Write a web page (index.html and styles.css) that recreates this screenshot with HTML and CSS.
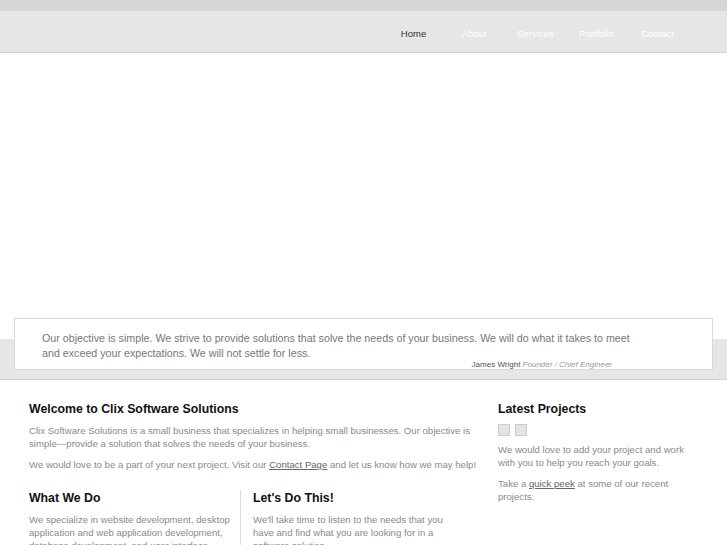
FILE: index.html
```html
<!DOCTYPE html>
<html>
<head>
<meta charset="utf-8">
<link rel="stylesheet" href="styles.css">
</head>
<body>
<div class="topstrip"></div>
<header class="navbar">
  <nav class="nav">
    <a class="nav-item active" href="#">Home</a>
    <a class="nav-item" href="#">About</a>
    <a class="nav-item" href="#">Services</a>
    <a class="nav-item" href="#">Portfolio</a>
    <a class="nav-item" href="#">Contact</a>
  </nav>
</header>
<div class="hero"></div>
<div class="band">
  <div class="quote">
    <p class="quote-text">Our objective is simple. We strive to provide solutions that solve the needs of your business. We will do what it takes to meet and exceed your expectations. We will not settle for less.</p>
    <p class="quote-by"><span class="name">James Wright</span> <span class="role">Founder / Chief Engineer</span></p>
  </div>
</div>
<main class="content">
  <section class="main-col">
    <h2>Welcome to Clix Software Solutions</h2>
    <p>Clix Software Solutions is a small business that specializes in helping small businesses. Our objective is simple—provide a solution that solves the needs of your business.</p>
    <p>We would love to be a part of your next project. Visit our <a href="#">Contact Page</a> and let us know how we may help!</p>
    <div class="split">
      <div class="split-col">
        <h2>What We Do</h2>
        <p>We specialize in website development, desktop application and web application development, database development, and user interface design.</p>
      </div>
      <div class="split-col right">
        <h2>Let's Do This!</h2>
        <p>We'll take time to listen to the needs that you have and find what you are looking for in a software solution.</p>
      </div>
    </div>
  </section>
  <aside class="side-col">
    <h2>Latest Projects</h2>
    <div class="thumbs"><span class="thumb"></span><span class="thumb"></span></div>
    <p>We would love to add your project and work with you to help you reach your goals.</p>
    <p>Take a <a href="#">quick peek</a> at some of our recent projects.</p>
  </aside>
</main>
</body>
</html>
```
FILE: styles.css
```css
* { box-sizing: border-box; }
html, body { margin: 0; padding: 0; background: #fff; }
body { font-family: "Liberation Sans", Arial, sans-serif; }
.topstrip { height: 11px; background: #d6d6d8; }
.navbar { height: 42px; background: #e6e6e6; border-bottom: 1px solid #d2d2d2; }
.nav { width: 699px; margin: 0 auto; display: flex; justify-content: flex-end; padding-right: 25px; height: 41px; align-items: center; padding-top: 4px; }
.nav-item { font-size: 9.5px; color: #fff; text-decoration: none; width: 61px; text-align: center; }
.nav-item.active { color: #333; }
.hero { height: 286px; }
.band { display: flow-root; height: 41px; background: #e6e6e6; border-bottom: 1px solid #d2d2d2; }
.quote { width: 699px; margin: -21px auto 0; height: 52px; background: #fff; border: 1px solid #d8d8d8; padding: 12px 27px 0; }
.quote-text { margin: 0; font-size: 10.7px; line-height: 15px; color: #777; padding-right: 40px; }
.quote-by { margin: -3px 0 0; text-align: right; padding-right: 73px; font-size: 8px; }
.quote-by .name { color: #555; }
.quote-by .role { color: #999; font-style: italic; }
.content { width: 699px; margin: 0 auto; padding: 21px 15px 0; display: flex; gap: 14px; }
.main-col { width: 455px; }
.side-col { width: 200px; }
h2 { margin: 0 0 7px; font-size: 12.3px; line-height: 16px; color: #111; font-weight: bold; }
p { margin: 0 0 8px; font-size: 9.6px; line-height: 13px; color: #8a8a8a; }
p a { color: #666; text-decoration: underline; }
.split { display: flex; margin-top: 19px; }
.split-col { width: 211px; padding-right: 10px; }
.split-col.right { border-left: 1px solid #ddd; padding-left: 12px; width: 230px; }
.thumbs { display: flex; gap: 5px; margin: 0 0 7px; }
.thumb { width: 12px; height: 12px; background: #e4e4e4; border: 1px solid #ccc; }
```
